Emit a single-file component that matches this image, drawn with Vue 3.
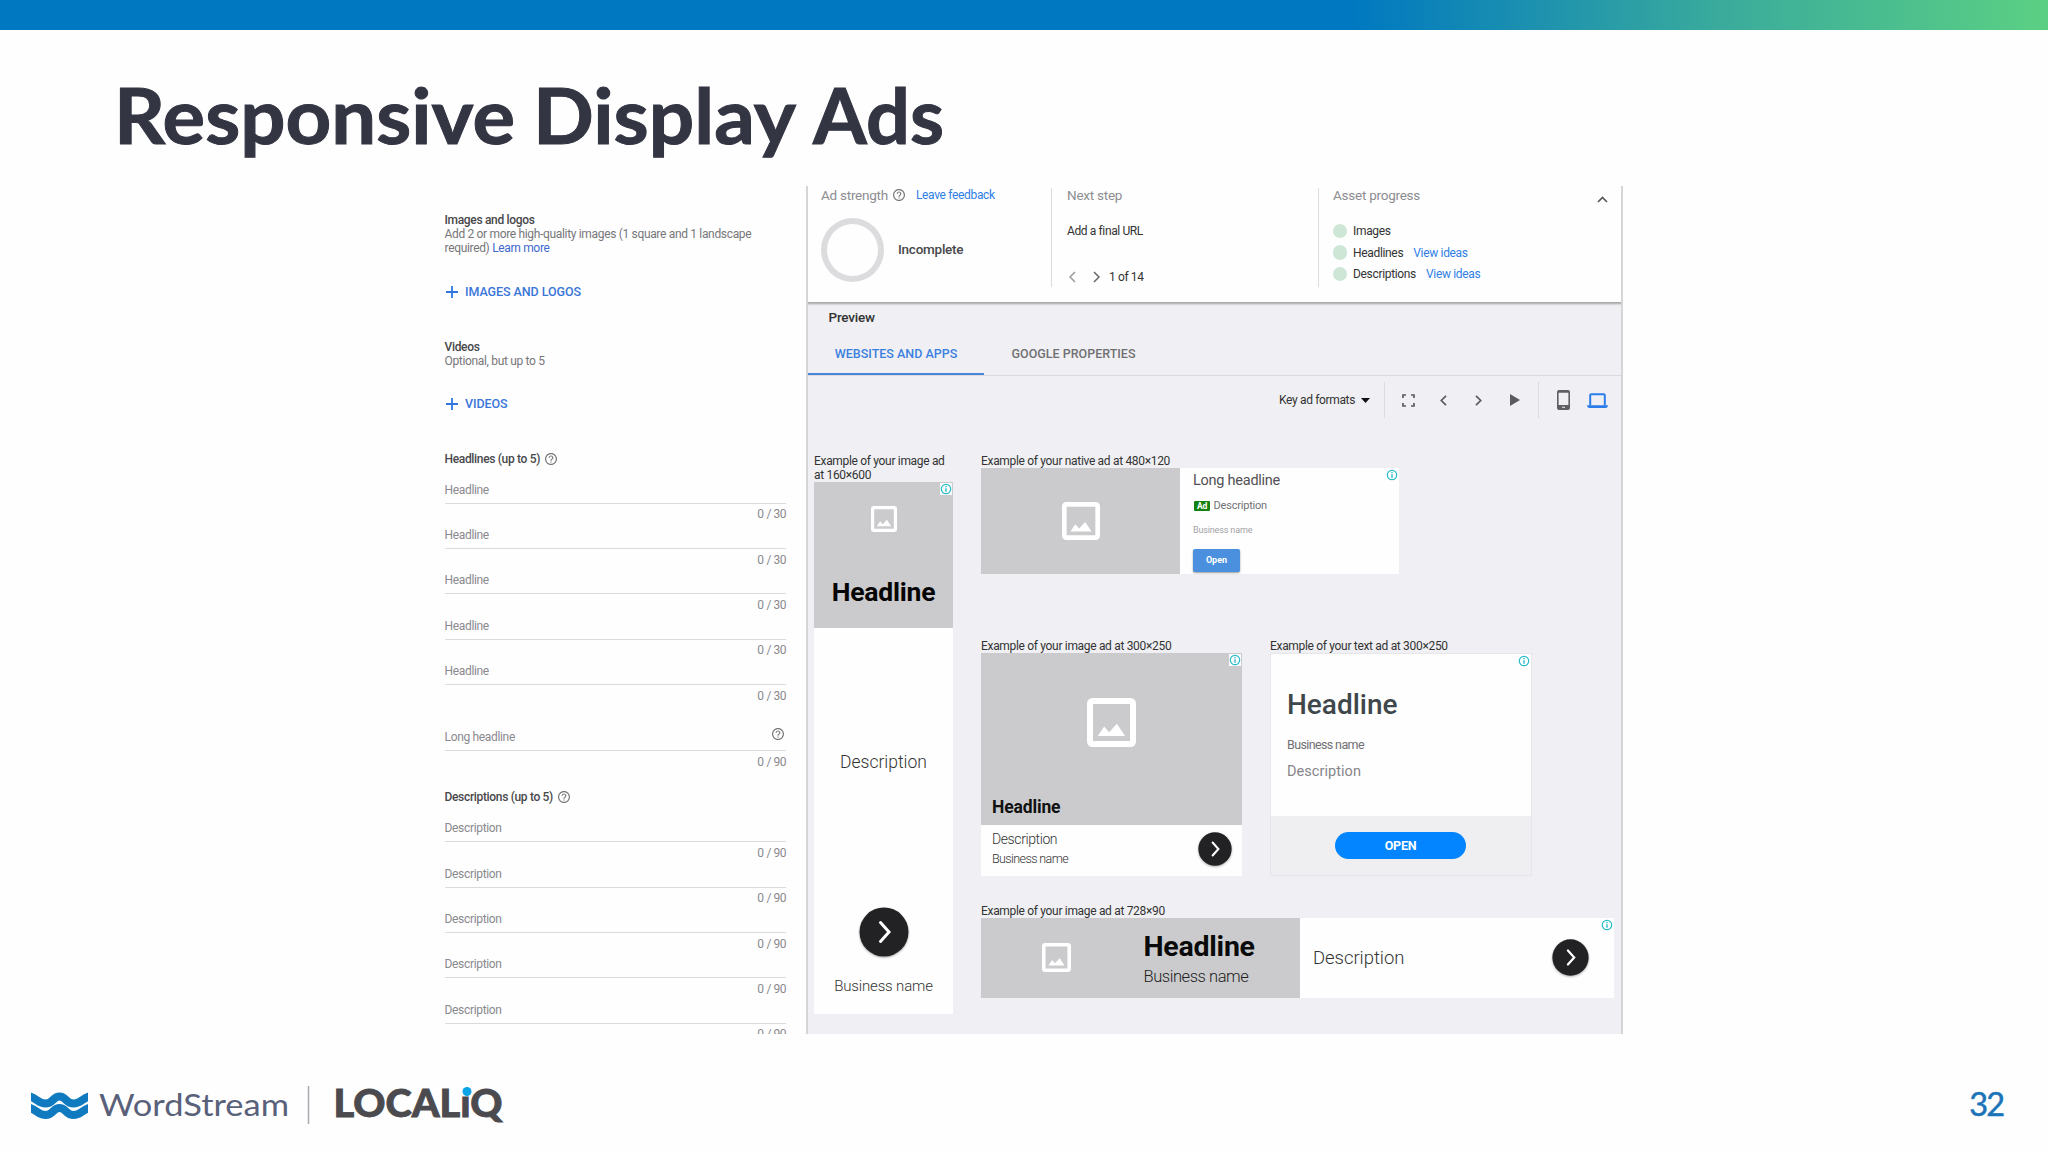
<script setup>
import { h } from 'vue'

const headlines = Array.from({ length: 5 }, () => ({ label: 'Headline', max: 30 }))
const descriptions = Array.from({ length: 5 }, () => ({ label: 'Description', max: 90 }))

const HelpIcon = () =>
  h('svg', { viewBox: '2 2 20 20', width: 12, height: 12, fill: 'currentColor' }, [
    h('path', {
      d: 'M11 18h2v-2h-2v2zm1-16C6.48 2 2 6.48 2 12s4.48 10 10 10 10-4.48 10-10S17.52 2 12 2zm0 18c-4.41 0-8-3.59-8-8s3.59-8 8-8 8 3.59 8 8-3.59 8-8 8zm0-14c-2.21 0-4 1.79-4 4h2c0-1.1.9-2 2-2s2 .9 2 2c0 2-3 1.75-3 5h2c0-2.25 3-2.5 3-5 0-2.21-1.79-4-4-4z'
    })
  ])

const PlusIcon = () =>
  h('svg', { viewBox: '0 0 12 12', width: 12, height: 12, stroke: '#2f76de', 'stroke-width': 1.8 }, [
    h('path', { d: 'M6 0v12M0 6h12' })
  ])

const InfoIcon = () =>
  h('svg', { viewBox: '0 0 12 12', width: 12, height: 12, fill: 'none', stroke: '#2bbccb' }, [
    h('circle', { cx: 6, cy: 6, r: 4.7, 'stroke-width': 1.2 }),
    h('path', { d: 'M6 5.2v3.6M6 3v1.3', 'stroke-width': 1.4 })
  ])

const PictureIcon = (props) =>
  h('svg', { viewBox: '0 0 36 36', width: props.size, height: props.size }, [
    h('path', {
      fill: '#fff',
      'fill-rule': 'evenodd',
      d: 'M4 0h28a4 4 0 0 1 4 4v28a4 4 0 0 1-4 4H4a4 4 0 0 1-4-4V4a4 4 0 0 1 4-4zM4.4 4.4v27.2h27.2V4.4z'
    }),
    h('path', { fill: '#fff', d: 'M8 28l4.600-7 3.600 4.200L22 19l6 9z' })
  ])
PictureIcon.props = ['size']

const ArrowButton = (props) =>
  h('svg', { viewBox: '0 0 50 50', width: props.size, height: props.size, class: 'arrow' }, [
    h('circle', { cx: 25, cy: 25, r: 24.5, fill: '#222124' }),
    h('path', {
      d: 'M21.500 15.500l8.500 9.500-8.500 9.500',
      fill: 'none',
      stroke: '#fff',
      'stroke-width': 3,
      'stroke-linecap': 'round'
    })
  ])
ArrowButton.props = ['size']
</script>

<template>
  <div class="slide">
    <div class="topbar"></div>
    <h1 class="title">
      <svg width="840" height="100" viewBox="0 0 840 100">
        <text y="74">
          <tspan x="-1" textLength="401" lengthAdjust="spacingAndGlyphs">Responsive</tspan>
          <tspan x="418" textLength="263" lengthAdjust="spacingAndGlyphs">Display</tspan>
          <tspan x="698" textLength="131" lengthAdjust="spacingAndGlyphs">Ads</tspan>
        </text>
      </svg>
    </h1>

    <main class="shot">
      <section class="form">
        <div class="bold">Images and logos</div>
        <p class="hint">Add 2 or more high-quality images (1 square and 1 landscape<br />required) <a>Learn more</a></p>
        <div class="add first"><PlusIcon /><span>IMAGES AND LOGOS</span></div>
        <div class="bold">Videos</div>
        <p class="hint">Optional, but up to 5</p>
        <div class="add second"><PlusIcon /><span>VIDEOS</span></div>

        <div class="group"><span class="bold">Headlines (up to 5)</span><HelpIcon /></div>
        <div v-for="(f, i) in headlines" :key="'h' + i" class="field">
          <div class="label">{{ f.label }}</div>
          <div class="count">0 / {{ f.max }}</div>
        </div>
        <div class="field long">
          <div class="label"><span>Long headline</span><HelpIcon /></div>
          <div class="count">0 / 90</div>
        </div>
        <div class="group desc"><span class="bold">Descriptions (up to 5)</span><HelpIcon /></div>
        <div v-for="(f, i) in descriptions" :key="'d' + i" class="field">
          <div class="label">{{ f.label }}</div>
          <div class="count">0 / {{ f.max }}</div>
        </div>
      </section>

      <section class="panel">
        <header class="status">
          <div class="strength">
            <div class="caption">
              <span class="cap-a">Ad strength</span><HelpIcon /><a class="feedback">Leave feedback</a>
            </div>
            <div class="meter">
              <div class="ring"></div>
              <span>Incomplete</span>
            </div>
          </div>
          <div class="next">
            <div class="caption"><span class="cap-b">Next step</span></div>
            <div class="url">Add a final URL</div>
            <div class="pager">
              <svg width="7" height="12" viewBox="0 0 7 12" stroke="#999"><path d="M6 1L1 6l5 5" /></svg>
              <svg width="7" height="12" viewBox="0 0 7 12" stroke="#666"><path d="M1 1l5 5-5 5" /></svg>
              <span>1 of 14</span>
            </div>
          </div>
          <div class="progress">
            <div class="caption">
              <span class="cap-c">Asset progress</span>
              <svg class="collapse" width="11" height="7" viewBox="0 0 11 7"><path d="M1 6l4.500-4.500L10 6" /></svg>
            </div>
            <div class="asset a1"><i></i><span>Images</span></div>
            <div class="asset"><i></i><span>Headlines</span><a>View ideas</a></div>
            <div class="asset"><i></i><span>Descriptions</span><a>View ideas</a></div>
          </div>
        </header>

        <div class="preview">Preview</div>
        <nav class="tabs">
          <div class="tab active">WEBSITES AND APPS</div>
          <div class="tab second-tab">GOOGLE PROPERTIES</div>
        </nav>

        <div class="toolbar">
          <span class="formats">Key ad formats</span>
          <svg class="tri" width="9" height="5" viewBox="0 0 9 5"><path d="M0 0h9L4.500 5z" fill="#111" /></svg>
          <div class="cell mid">
            <svg width="13" height="13" viewBox="0 0 13 13" class="line"><path d="M1 4V1h3M9 1h3v3M12 9v3H9M4 12H1V9" /></svg>
            <svg width="7" height="11" viewBox="0 0 7 11" class="line"><path d="M6 .8L1.300 5.500 6 10.200" /></svg>
            <svg width="7" height="11" viewBox="0 0 7 11" class="line"><path d="M1 .8l4.700 4.700L1 10.200" /></svg>
            <svg width="10" height="12" viewBox="0 0 10 12"><path d="M0 0l10 6-10 6z" fill="#5b5b5e" /></svg>
          </div>
          <div class="cell devices">
            <svg width="13" height="20" viewBox="0 0 13 20">
              <path
                fill="#5f5f62"
                fill-rule="evenodd"
                d="M2 0h9a2 2 0 0 1 2 2v16a2 2 0 0 1-2 2H2a2 2 0 0 1-2-2V2a2 2 0 0 1 2-2zM1.600 2.800v12.200h9.800V2.800zM5 16.800v1h3v-1z"
              />
            </svg>
            <svg width="21" height="15" viewBox="0 0 21 15">
              <path d="M3.200 12.500V2.200q0-1 1-1h12.600q1 0 1 1v10.300" fill="none" stroke="#2b7de9" stroke-width="2" />
              <path d="M0 12.300h21q0 2.700-2 2.700H2q-2 0-2-2.700z" fill="#2b7de9" />
            </svg>
          </div>
        </div>

        <div class="ads">
          <div class="sky-col">
            <div class="adlabel">Example of your image ad<br />at 160×600</div>
            <article class="sky">
              <div class="sky-top">
                <PictureIcon :size="26" />
                <strong>Headline</strong>
                <span class="info"><InfoIcon /></span>
              </div>
              <span class="sky-desc">Description</span>
              <ArrowButton :size="50" />
              <span class="sky-biz">Business name</span>
            </article>
          </div>

          <div class="wide-col">
            <div class="adlabel">Example of your native ad at 480×120</div>
            <article class="native">
              <div class="pic"><PictureIcon :size="38" /></div>
              <div class="copy">
                <div class="n-head">Long headline</div>
                <div class="n-desc"><b>Ad</b><span>Description</span></div>
                <div class="n-biz">Business name</div>
                <button>Open</button>
              </div>
              <span class="info clear"><InfoIcon /></span>
            </article>

            <div class="pair">
              <div class="square-col">
                <div class="adlabel">Example of your image ad at 300×250</div>
                <article class="square">
                  <div class="s-pic">
                    <PictureIcon :size="49" />
                    <strong>Headline</strong>
                  </div>
                  <div class="s-foot">
                    <div>
                      <div class="s-desc">Description</div>
                      <div class="s-biz">Business name</div>
                    </div>
                    <ArrowButton :size="34" />
                  </div>
                  <span class="info"><InfoIcon /></span>
                </article>
              </div>
              <div class="text-col">
                <div class="adlabel">Example of your text ad at 300×250</div>
                <article class="textad">
                  <div class="t-body">
                    <div class="t-head">Headline</div>
                    <div class="t-biz">Business name</div>
                    <div class="t-desc">Description</div>
                  </div>
                  <div class="t-foot"><button>OPEN</button></div>
                  <span class="info clear"><InfoIcon /></span>
                </article>
              </div>
            </div>

            <div class="adlabel last">Example of your image ad at 728×90</div>
            <article class="banner">
              <div class="b-left">
                <PictureIcon :size="29" />
                <div>
                  <div class="b-head">Headline</div>
                  <div class="b-biz">Business name</div>
                </div>
              </div>
              <div class="b-right">
                <span>Description</span>
                <ArrowButton :size="37" />
              </div>
              <span class="info clear"><InfoIcon /></span>
            </article>
          </div>
        </div>
      </section>
    </main>

    <footer class="footer">
      <svg width="520" height="60" viewBox="0 0 520 60">
        <clipPath id="wave-box"><rect x="31" y="0" width="57" height="50" /></clipPath>
        <g fill="none" stroke="#0f7abf" stroke-width="8" clip-path="url(#wave-box)">
          <path d="M27 15.500C38 18.500 38 23.500 45.500 23.500S53 16.500 59.500 16.500 66 23.500 73.500 23.500 81 18.500 92 15.500" />
          <path d="M27 27C38 30 38 35 45.500 35S53 28 59.500 28 66 35 73.500 35 81 30 92 27" />
        </g>
        <text class="ws" x="99" y="36" textLength="190" lengthAdjust="spacingAndGlyphs">WordStream</text>
        <path d="M308.500 6v38" stroke="#aaaab0" stroke-width="1.500" />
        <text class="liq" x="333.500" y="37" textLength="169" lengthAdjust="spacingAndGlyphs">LOCALıQ</text>
        <circle cx="467" cy="11.500" r="4.500" fill="#0aa5e6" />
      </svg>
      <span class="page">32</span>
    </footer>
  </div>
</template>

<style>
body {
  margin: 0;
  background: #fefefe;
}
</style>

<style scoped>
* {
  box-sizing: border-box;
}
svg {
  display: block;
  flex: none;
}
.slide {
  width: 2048px;
  height: 1152px;
  display: flex;
  flex-direction: column;
  overflow: hidden;
  background: #fefefe;
  font-family: Roboto, 'Liberation Sans', sans-serif;
}
.topbar {
  height: 30px;
  flex: none;
  background: linear-gradient(90deg, #0078c1 66%, #3aab9c 84%, #5bd083 100%);
}
.title {
  margin: 40px 0 0 115px;
  height: 116px;
  flex: none;
}
.title svg {
  overflow: visible;
}
.title text {
  font: 700 77px Lato, sans-serif;
  fill: #343543;
  stroke: #343543;
  stroke-width: 1px;
}
.shot {
  margin-left: 430px;
  width: 1193px;
  height: 848px;
  flex: none;
  display: flex;
  overflow: hidden;
}
a {
  color: #2f7fe6;
}
p {
  margin: 0;
}

/* form column */
.form {
  width: 376px;
  flex: none;
  padding: 27px 20px 0 14.500px;
  font-size: 12px;
  letter-spacing: -0.330px;
  line-height: 14px;
  color: #77777a;
  white-space: nowrap;
}
.bold {
  font-weight: 500;
  color: #48484b;
}
.hint a {
  color: #4169cf;
}
.add {
  display: flex;
  align-items: center;
  gap: 7.500px;
  height: 14px;
  padding-left: 1px;
  font-size: 12.500px;
  letter-spacing: -0.070px;
  font-weight: 500;
  color: #3a76d8;
}
.add.first {
  margin: 30px 0 41px;
}
.add.second {
  margin: 29px 0 41px;
}
.group {
  display: flex;
  align-items: center;
  gap: 5px;
  height: 14px;
  margin-bottom: 16.700px;
}
.field {
  height: 45.350px;
  color: #8a898e;
}
.label {
  height: 21px;
  border-bottom: 1px solid #dcd9e1;
  display: flex;
  justify-content: space-between;
}
.label svg {
  margin: -2px 2.500px 0 0;
  color: #77777a;
}
.count {
  text-align: right;
  margin-top: 3.500px;
  letter-spacing: -0.550px;
  word-spacing: 0.400px;
}
.field.long {
  margin-top: 21px;
}
.group.desc {
  margin: 14px 0 17.700px;
}

/* preview panel */
.panel {
  width: 817px;
  flex: none;
  background: #f0f0f4;
  border-left: 2px solid #d5d5d8;
  border-right: 2px solid #d5d5d8;
  color: #333;
}
.status {
  height: 115.500px;
  background: #fefefe;
  display: flex;
  box-shadow: 0 1px 2px 1px #a5a5a8;
  clip-path: inset(0 0 -5px 0);
  position: relative;
}
.caption {
  height: 18px;
  display: flex;
  align-items: center;
  font-size: 13.500px;
  letter-spacing: -0.250px;
  color: #8d8d91;
}
.strength {
  width: 243px;
  padding-left: 13px;
}
.caption > svg {
  margin-left: 5px;
  color: #77777a;
}
.feedback {
  margin-left: 11px;
  font-size: 12px;
  letter-spacing: -0.330px;
}
.meter {
  display: flex;
  align-items: center;
  margin-top: 14px;
  gap: 14px;
  font-size: 13.500px;
  letter-spacing: -0.250px;
  line-height: 15px;
  font-weight: 500;
  color: #48484b;
}
.meter span {
  margin-top: -1px;
}
.ring {
  width: 63px;
  height: 64px;
  border: 6.500px solid #dcdcdf;
  border-radius: 50%;
}
.next,
.progress {
  height: 99px;
  margin-top: 2px;
  border-left: 1px solid #dcdcdf;
  padding-left: 15px;
  letter-spacing: -0.380px;
}
.next {
  width: 267px;
  font-size: 12px;
}
.next .caption,
.progress .caption {
  height: 14px;
}
.url {
  margin-top: 21px;
  height: 16px;
  line-height: 16px;
}
.pager {
  display: flex;
  align-items: center;
  margin-top: 30px;
  height: 16px;
  padding-left: 2px;
}
.pager svg {
  fill: none;
  stroke-width: 1.500;
}
.pager svg + svg {
  margin: 0 9px 0 17px;
}
.progress {
  flex: 1;
  font-size: 12px;
  letter-spacing: -0.330px;
  padding-left: 14px;
}
.caption .collapse {
  margin: 9px 13px 0 auto;
  fill: none;
  stroke: #555;
  stroke-width: 1.600;
}
.asset {
  height: 21.700px;
  display: flex;
  align-items: center;
}
.asset.a1 {
  margin-top: 18px;
}
.asset i {
  width: 14.500px;
  height: 14.500px;
  border-radius: 50%;
  background: #cde6d6;
  margin-left: -0.500px;
  margin-right: 6px;
}
.asset a {
  margin-left: 10px;
}
.preview {
  height: 32.500px;
  line-height: 31px;
  padding-left: 20.500px;
  font-size: 13.500px;
  letter-spacing: -0.200px;
  font-weight: 500;
  color: #333;
}
.tabs {
  display: flex;
  height: 42px;
  border-bottom: 1px solid #dadade;
}
.tab {
  height: 41px;
  line-height: 40px;
  width: 176px;
  text-align: center;
  font-size: 12.500px;
  font-weight: 500;
  color: #707073;
}
.tab.second-tab {
  margin-left: 1.500px;
}
.tab.active {
  color: #3b80df;
  border-bottom: 2px solid #4a86d8;
}
.toolbar {
  height: 48px;
  display: flex;
  align-items: center;
  padding: 0 13px 0 0;
  justify-content: flex-end;
  font-size: 12px;
}
.formats {
  letter-spacing: -0.350px;
}
.tri {
  margin: 0 13.500px 0 6px;
}
.cell {
  height: 36px;
  border-left: 1px solid #dcdce0;
  display: flex;
  align-items: center;
}
.cell .line {
  fill: none;
  stroke: #5b5b5e;
  stroke-width: 1.700;
}
.mid {
  padding-left: 17.500px;
  width: 154px;
}
.mid svg:nth-child(2) {
  margin-left: 25px;
}
.mid svg:nth-child(3) {
  margin: 0 28px;
}
.devices {
  padding-left: 18px;
  gap: 17.500px;
}

/* ads */
.ads {
  display: flex;
  padding: 30px 0 0 6px;
}
.adlabel {
  font-size: 12px;
  letter-spacing: -0.320px;
  line-height: 14px;
  color: #333;
  white-space: nowrap;
}
article {
  position: relative;
}
.info {
  position: absolute;
  top: 1px;
  right: 1px;
  background: #fdfdfd;
}
.info.clear {
  background: none;
}
.sky-col {
  width: 139px;
  margin-right: 28px;
}
.sky {
  height: 532px;
  background: #fefefe;
  display: flex;
  flex-direction: column;
  align-items: center;
}
.sky-top {
  width: 100%;
  height: 145.500px;
  background: #cbcacc;
  display: flex;
  flex-direction: column;
  align-items: center;
  padding-top: 24px;
}
.sky-top strong {
  font-size: 26.500px;
  letter-spacing: -0.200px;
  line-height: 30px;
  font-weight: 700;
  color: #050505;
  margin-top: 45px;
}
.sky-desc {
  margin: 123.500px 0 0;
  font-size: 17.500px;
  line-height: 22px;
  font-weight: 300;
}
.sky .arrow {
  margin-top: 134px;
}
.sky-biz {
  margin-top: 19px;
  font-size: 15px;
  letter-spacing: -0.150px;
  line-height: 20px;
  font-weight: 300;
}
.arrow {
  filter: drop-shadow(0 1px 1px #0005);
}
.wide-col {
  width: 634px;
}
.native {
  width: 418px;
  height: 106px;
  background: #fefefe;
  display: flex;
}
.pic {
  width: 199px;
  background: #cbcbcd;
  display: flex;
  align-items: center;
  justify-content: center;
}
.copy {
  padding: 4px 0 0 13px;
}
.n-head {
  font-size: 14.500px;
  letter-spacing: -0.250px;
  line-height: 18px;
  color: #515155;
}
.n-desc {
  display: flex;
  align-items: center;
  gap: 3.500px;
  margin-top: 7.500px;
  height: 16px;
  padding-left: 1px;
  font-size: 11px;
  letter-spacing: -0.200px;
  color: #727276;
}
.n-desc b {
  width: 16px;
  height: 10px;
  border-radius: 1px;
  background: #138213;
  color: #fff;
  font-size: 8.500px;
  line-height: 10px;
  text-align: center;
}
.n-biz {
  margin-top: 10.500px;
  font-size: 9px;
  letter-spacing: -0.150px;
  line-height: 12px;
  color: #a2a2a6;
}
button {
  border: 0;
  padding: 0;
  font-family: inherit;
  color: #fff;
  display: block;
}
.native button {
  margin-top: 12.500px;
  width: 47px;
  height: 23px;
  border-radius: 2px;
  background: #4a90de;
  box-shadow: 0 1px 2px #0006;
  font-size: 9px;
  font-weight: 700;
}
.pair {
  display: flex;
  margin-top: 65px;
}
.square-col {
  width: 289px;
}
.square {
  width: 261px;
  height: 223px;
  background: #fefefe;
}
.s-pic {
  height: 171.500px;
  background: #cbcbcd;
  padding-top: 45px;
}
.s-pic svg {
  margin: 0 auto;
}
.s-pic strong {
  display: block;
  margin: 50px 0 0 11px;
  font-size: 17.500px;
  letter-spacing: -0.150px;
  line-height: 20px;
  color: #111;
}
.s-foot {
  display: flex;
  justify-content: space-between;
  padding: 4px 10px 0 11px;
}
.s-foot .arrow {
  margin-top: 3px;
}
.s-desc {
  font-size: 14px;
  letter-spacing: -0.400px;
  line-height: 20px;
  font-weight: 300;
}
.s-biz {
  font-size: 12.500px;
  letter-spacing: -0.600px;
  line-height: 20px;
  font-weight: 300;
}
.textad {
  width: 262px;
  height: 223px;
  border: 1px solid #e6e6ea;
  background: #fefefe;
  display: flex;
  flex-direction: column;
}
.t-body {
  height: 162px;
  padding: 34px 0 0 16px;
}
.t-head {
  font-size: 28px;
  line-height: 34px;
  font-weight: 500;
  color: #3f474b;
}
.t-biz {
  margin-top: 14px;
  font-size: 12.500px;
  letter-spacing: -0.620px;
  line-height: 18px;
  color: #707074;
}
.t-desc {
  margin-top: 8px;
  font-size: 14.500px;
  letter-spacing: 0.050px;
  line-height: 20px;
  color: #86868a;
}
.t-foot {
  flex: 1;
  background: #efeff1;
  padding: 16px 0 0 64px;
}
.t-foot button {
  width: 131px;
  height: 27px;
  border-radius: 14px;
  background: #0385ff;
  font-size: 12.500px;
  font-weight: 700;
  letter-spacing: -0.200px;
}
.adlabel.last {
  margin-top: 27.500px;
}
.banner {
  width: 633px;
  height: 80px;
  background: #fefefe;
  display: flex;
}
.b-left {
  width: 319px;
  background: #cbcbcd;
  display: flex;
  padding-left: 61px;
}
.b-left svg {
  margin: 25px 72.500px 0 0;
}
.b-head {
  font-size: 28.500px;
  letter-spacing: -0.250px;
  line-height: 32px;
  font-weight: 700;
  color: #0a0a0a;
  margin-top: 13px;
}
.b-biz {
  font-size: 16.500px;
  letter-spacing: -0.450px;
  line-height: 22px;
  margin-top: 3px;
  font-weight: 300;
  color: #222;
}
.b-right {
  flex: 1;
  display: flex;
  align-items: center;
  justify-content: space-between;
  padding: 0 25px 0 13px;
  font-size: 18.500px;
  letter-spacing: -0.050px;
  font-weight: 300;
}

/* footer */
.footer {
  display: flex;
  justify-content: space-between;
  margin-top: 46px;
}
.ws {
  font: 400 31.500px Lato, sans-serif;
  fill: #59617a;
}
.liq {
  font: 900 37px Lato, sans-serif;
  fill: #4b4a4e;
  stroke: #4b4a4e;
  stroke-width: 0.800px;
}
.page {
  font: 400 32.500px/48px Lato, sans-serif;
  letter-spacing: -2px;
  color: #1c74b8;
  -webkit-text-stroke: 0.500px #1c74b8;
  margin-right: 45px;
}
</style>
